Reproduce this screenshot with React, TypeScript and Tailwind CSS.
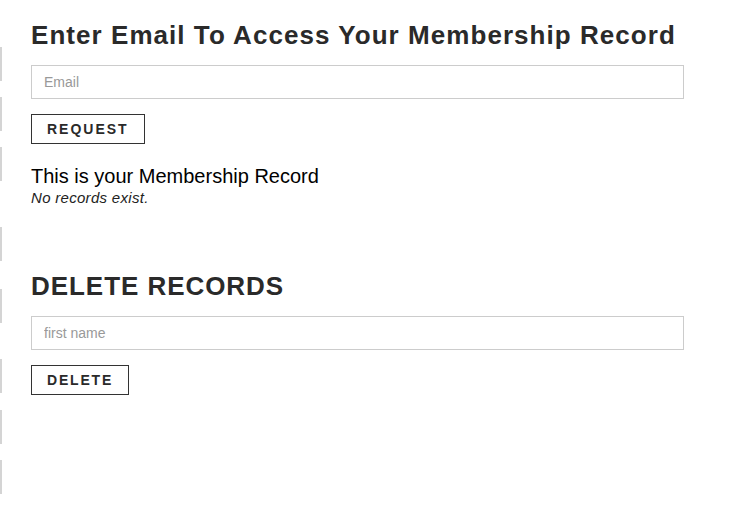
import React from 'react'

const edgeMarks = [47, 97, 147, 227, 289, 359, 410, 460]

const App = () => {
  return (
    <div className="relative min-h-[512px] w-[733px] bg-white font-['Liberation_Sans',Arial,sans-serif]">
      {/* left edge marks */}
      {edgeMarks.map((top) => (
        <div key={top} className="absolute left-0 w-[2px] h-[34px] bg-[#d4d4d4]" style={{ top }} />
      ))}

      <div className="pl-[31px] pr-[49px] pt-[18px]">
        {/* Request section */}
        <h2 className="text-[26px] leading-[34px] font-bold tracking-[1.05px] text-[#2a2a2a]">
          Enter Email To Access Your Membership Record
        </h2>
        <input
          type="text"
          placeholder="Email"
          className="mt-[13px] block w-full h-[34px] border border-[#cccccc] px-3 text-[14px] text-[#333] placeholder:text-[#999] outline-none"
        />
        <button className="mt-[15px] block h-[30px] px-[15px] border border-[#333] text-[14px] font-bold tracking-[2px] text-[#2a2a2a] bg-white">
          REQUEST
        </button>

        <p className="mt-[20px] text-[20px] leading-[24px] text-black">This is your Membership Record</p>
        <p className="text-[15px] leading-[19px] italic tracking-[0.3px] text-[#222]">No records exist.</p>

        {/* Delete section */}
        <h2 className="mt-[62px] text-[26px] leading-[34px] font-bold tracking-[0.95px] text-[#2a2a2a]">
          DELETE RECORDS
        </h2>
        <input
          type="text"
          placeholder="first name"
          className="mt-[13px] block w-full h-[34px] border border-[#cccccc] px-3 text-[14px] text-[#333] placeholder:text-[#999] outline-none"
        />
        <button className="mt-[15px] block h-[30px] px-[15px] border border-[#333] text-[14px] font-bold tracking-[1.8px] text-[#2a2a2a] bg-white">
          DELETE
        </button>
      </div>
    </div>
  )
}

export default App
